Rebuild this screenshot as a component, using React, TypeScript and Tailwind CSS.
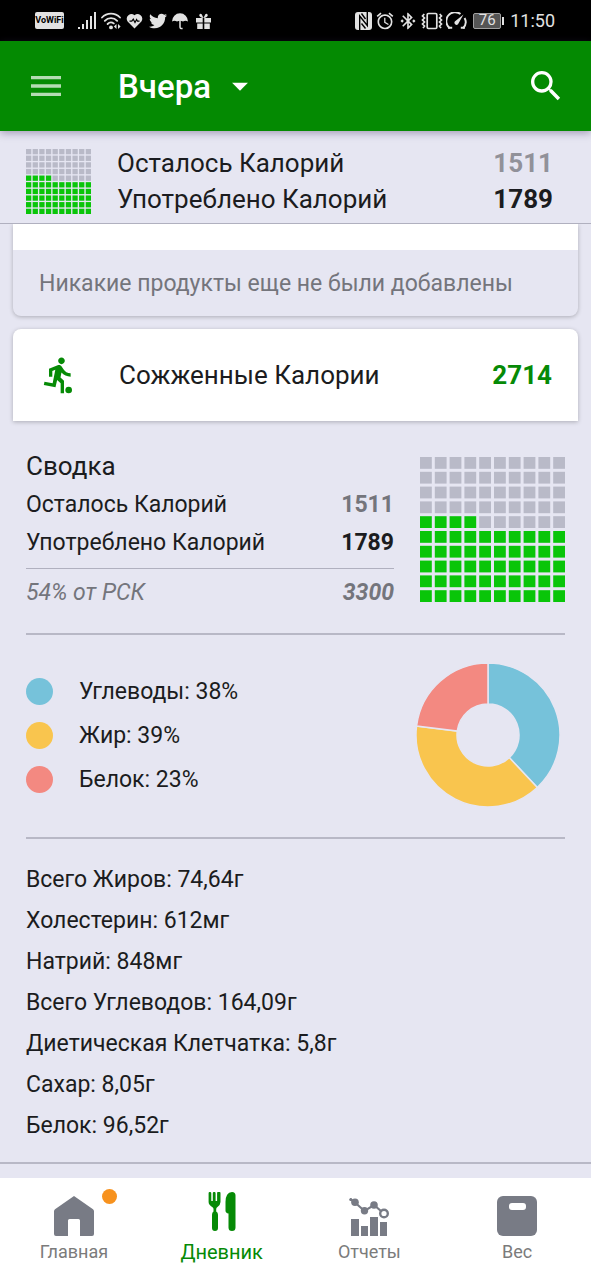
import type { ReactNode } from "react";
import { FaTwitter } from "react-icons/fa";
import {
  MdAlarm,
  MdArrowDropDown,
  MdBluetoothConnected,
  MdMenu,
  MdSearch,
} from "react-icons/md";

const TOTAL_CELLS = 100;

const macros = [
  { name: "Углеводы", percent: 38, dot: "bg-[#76c2da]", fill: "fill-[#76c2da]" },
  { name: "Жир", percent: 39, dot: "bg-[#f9c54e]", fill: "fill-[#f9c54e]" },
  { name: "Белок", percent: 23, dot: "bg-[#f38981]", fill: "fill-[#f38981]" },
];

const nutrients = [
  { name: "Всего Жиров", amount: "74,64г" },
  { name: "Холестерин", amount: "612мг" },
  { name: "Натрий", amount: "848мг" },
  { name: "Всего Углеводов", amount: "164,09г" },
  { name: "Диетическая Клетчатка", amount: "5,8г" },
  { name: "Сахар", amount: "8,05г" },
  { name: "Белок", amount: "96,52г" },
];

function SignalIcon() {
  return (
    <svg className="h-[18px] w-[18px] fill-current" viewBox="0 0 18 18">
      <path d="M0 15h2v2H0zM4 12h2v5H4zM8 8h2v9H8zM12 4h2v13h-2zM16 0h2v17h-2z" />
    </svg>
  );
}

function WifiIcon() {
  return (
    <svg className="h-[18px] w-5" viewBox="0 0 20 18">
      <g fill="none" stroke="currentColor" strokeWidth="1.8" strokeLinecap="round">
        <path d="M1 5.500a12.500 12.500 0 0 1 18 0" />
        <path d="M3.800 8.800a8.500 8.500 0 0 1 12.400 0" />
        <path d="M6.600 12a4.800 4.800 0 0 1 6.200-.6" />
      </g>
      <circle cx="10" cy="15.400" r="1.900" fill="currentColor" />
      <path d="M15.500 12v5l-2.600-2.500zM17 12v5l2.600-2.500z" fill="currentColor" />
    </svg>
  );
}

function HeartRateIcon() {
  return (
    <svg className="h-[18px] w-[17px]" viewBox="0 0 17 18">
      <path
        d="M8.500 16.500L1.600 9.400A4.700 4.700 0 0 1 8.500 3.200a4.700 4.700 0 0 1 6.900 6.200z"
        fill="currentColor"
      />
      <path
        d="M3.500 9.200h2.300l1.500-2 1.700 3.300 1.600-3 .9 1.700h2"
        fill="none"
        stroke="#000"
        strokeWidth="1.200"
      />
    </svg>
  );
}

function UmbrellaIcon() {
  return (
    <svg className="h-[18px] w-4" viewBox="0 0 16 18">
      <path
        d="M0 9.500a8 8.200 0 0 1 16 0q-2.600-1.600-5 0-3-1.400-6 0-2.400-1.600-5 0z"
        fill="currentColor"
      />
      <path
        d="M8 8v7q0 1.800 2.600 1.500"
        fill="none"
        stroke="currentColor"
        strokeWidth="1.500"
      />
    </svg>
  );
}

function GiftIcon() {
  return (
    <svg className="h-[18px] w-[15px]" viewBox="0 0 15 18">
      <path
        d="M0 6h6.700v4.500H0zM8.300 6H15v4.500H8.300zM1.200 11.500h5.500V17H1.200zM8.300 11.500h5.500V17H8.300z"
        fill="currentColor"
      />
      <path
        d="M7.500 6L5.700 2.200Q4 1 3.200 3.200 3.500 5.500 7.500 6l1.800-3.800q1.700-1.200 2.500 1Q11.500 5.500 7.500 6z"
        fill="currentColor"
      />
    </svg>
  );
}

function NfcIcon() {
  return (
    <svg className="h-[18px] w-[17px]" viewBox="0 0 17 18">
      <rect width="17" height="18" rx="3" fill="currentColor" />
      <path
        d="M4.700 18V4l7.600 9.500V0"
        fill="none"
        stroke="#000"
        strokeWidth="1.400"
      />
      <path d="M6.500 1.500l4 5.500M6.500 11.500l4 5" stroke="#000" strokeWidth="1.400" />
    </svg>
  );
}

function VibrateIcon() {
  return (
    <svg className="h-[18px] w-[22px]" viewBox="0 0 22 18">
      <g fill="none" stroke="currentColor" strokeWidth="1.7">
        <rect x="6.2" y="1.5" width="9.6" height="15" rx="1.2" />
        <path d="M3.300 2L1.500 4l2 2-2 2 2 2-2 2 2 2-1.500 2M18.700 2l1.800 2-2 2 2 2-2 2 2 2-2 2 1.500 2" />
      </g>
    </svg>
  );
}

function GaugeIcon() {
  return (
    <svg className="h-[18px] w-[21px]" viewBox="0 0 21 18">
      <g fill="none" stroke="currentColor" strokeWidth="1.900">
        <path d="M3.800 16.200A8.600 8.600 0 0 1 14.500 2" />
        <path d="M18.600 6a8.600 8.600 0 0 1-1.600 10.200" />
        <path d="M2 15.800h4.200M19 15.800h-4.200" />
      </g>
      <path d="M17.500 2.500L12 12.200a2.100 2.100 0 0 1-3.200-2.700z" fill="currentColor" />
    </svg>
  );
}

function ExerciseIcon() {
  return (
    <svg className="h-10 w-10 fill-[#068a06]" viewBox="0 0 24 24">
      <path d="M13.49 5.48c1.1 0 2-.9 2-2s-.9-2-2-2-2 .9-2 2 .9 2 2 2zm-3.6 13.9l1-4.4 2.1 2v6h2v-7.5l-2.1-2 .6-3c1.3 1.5 3.3 2.5 5.5 2.5v-2c-1.9 0-3.5-1-4.3-2.4l-1-1.6c-.4-.6-1-1-1.7-1-.3 0-.5.1-.8.1l-5.2 2.2v4.7h2v-3.4l1.8-.7-1.6 8.1-4.9-1-.4 2 7 1.4z" />
      <circle cx="17.8" cy="21" r="2" />
    </svg>
  );
}

function HomeIcon() {
  return (
    <svg className="size-10 fill-current" viewBox="0 0 40 40">
      <path d="M20 0L39 13.2q1 .8 1 2V38a2 2 0 0 1-2 2H26V24.500a1.500 1.500 0 0 0-1.500-1.500h-9a1.500 1.500 0 0 0-1.500 1.500V40H2a2 2 0 0 1-2-2V15.200q0-1.200 1-2z" />
    </svg>
  );
}

function DiaryIcon() {
  return (
    <svg className="size-10 fill-current" viewBox="0 0 40 40">
      <path d="M8 0a1.300 1.300 0 0 1 1.300 1.300V9h1.500V1.300a1.400 1.400 0 0 1 2.800 0V9h1.500V1.300a1.300 1.300 0 0 1 3.400 0V10q0 3-3.300 5.300-1 .7-1 2v2.200q1.800 1 1.800 3.200V36a3 3 0 0 1-6 0V22.700q0-2.200 1.500-3.200v-2.200q0-1.300-1-2Q6.600 13 6.600 10V1.300A1.300 1.300 0 0 1 8 0z" />
      <path d="M30 0q3.500.2 3.500 3.500V35.500a3.500 3.500 0 0 1-7 0V21.500q-3-.3-3-3V10Q23.500.5 30 0z" />
    </svg>
  );
}

function ReportsIcon() {
  return (
    <svg className="size-10" viewBox="0 0 40 40">
      <path
        d="M2 23h8v17H2zM12 30h7v10h-7zM21 21h8v19h-8zM31 26h7v14h-7z"
        fill="currentColor"
      />
      <g fill="none" stroke="currentColor" strokeWidth="2.2">
        <path d="M1 3l5 3.500 9.500 8.500L25 9l7 6" />
        <circle cx="35" cy="17.500" r="3.800" strokeWidth="2.400" />
      </g>
      <g fill="currentColor">
        <circle cx="1.800" cy="3.500" r="1.500" />
        <circle cx="6" cy="6.300" r="3.800" />
        <circle cx="15.500" cy="14.800" r="3.700" />
        <circle cx="25" cy="9" r="3.800" />
      </g>
    </svg>
  );
}

function WeightIcon() {
  return (
    <svg className="size-10" viewBox="0 0 40 40">
      <rect width="40" height="40" rx="6" fill="currentColor" />
      <rect x="12" y="7" width="17" height="7" rx="3" fill="#fff" />
    </svg>
  );
}

function CalorieGrid({ filled, className }: { filled: number; className: string }) {
  return (
    <svg className={className} viewBox="0 0 145 145">
      {Array.from({ length: TOTAL_CELLS }, (_, i) => {
        const row = Math.floor(i / 10);
        const col = i % 10;
        // cells fill from the bottom row up, left to right
        const isFilled = (9 - row) * 10 + col < filled;
        return (
          <rect
            key={i}
            x={col * 14.8}
            y={row * 14.8}
            width="11.8"
            height="11.8"
            className={isFilled ? "fill-[#09c509]" : "fill-[#b9bac8]"}
          />
        );
      })}
    </svg>
  );
}

function point(percent: number, radius: number) {
  const angle = (percent / 100) * Math.PI * 2;
  return `${71 + radius * Math.sin(angle)} ${71 - radius * Math.cos(angle)}`;
}

function MacroChart() {
  let start = 0;
  return (
    <svg className="mr-1.5 size-[142px] shrink-0 overflow-visible" viewBox="0 0 142 142">
      {macros.map(({ name, percent, fill }) => {
        const from = start;
        const to = start + percent;
        start = to;
        return (
          <path
            key={name}
            className={`${fill} stroke-[#e6e6f2]`}
            strokeWidth="1.5"
            d={`M${point(from, 72)}A72 72 0 0 1 ${point(to, 72)}L${point(to, 31)}A31 31 0 0 0 ${point(from, 31)}Z`}
          />
        );
      })}
    </svg>
  );
}

function StatusBar() {
  return (
    <div className="flex h-[41px] items-center justify-between bg-black pr-9 pl-[35px] text-[#e2e2e2]">
      <div className="flex items-center">
        <span className="flex h-[17px] w-[29px] items-center justify-center rounded-xs bg-[#e2e2e2] text-[9px] font-bold text-black">
          VoWiFi
        </span>
        <div className="ml-[14px] flex items-center gap-[5px]">
          <SignalIcon />
          <WifiIcon />
          <HeartRateIcon />
          <FaTwitter className="ml-px size-[18px]" />
          <UmbrellaIcon />
          <span className="ml-[3px]">
            <GiftIcon />
          </span>
        </div>
      </div>
      <div className="flex items-center">
        <div className="flex items-center gap-[3px]">
          <NfcIcon />
          <MdAlarm className="size-5" />
          <MdBluetoothConnected className="size-5" />
          <VibrateIcon />
          <GaugeIcon />
        </div>
        <div className="ml-1.5 flex items-center gap-px">
          <span className="flex h-4 w-7 items-center justify-center rounded-xs border border-[#a0a0a0] bg-[#555] text-[15px]">
            76
          </span>
          <span className="h-2 w-0.5 bg-[#e2e2e2]" />
        </div>
        <span className="ml-1.5 text-lg">11:50</span>
      </div>
    </div>
  );
}

function NavItem({
  label,
  active = false,
  badge = false,
  children,
}: {
  label: string;
  active?: boolean;
  badge?: boolean;
  children: ReactNode;
}) {
  return (
    <a
      href="#"
      aria-current={active ? "page" : undefined}
      className={
        active
          ? "flex flex-1 flex-col items-center gap-1 pt-[14px] text-[#068a06]"
          : "flex flex-1 flex-col items-center gap-1 pt-[18px] text-[#787b85]"
      }
    >
      <span className="relative">
        {children}
        {badge && (
          <span className="absolute -top-[7px] -right-[23px] size-[15px] rounded-full bg-[#f7921e]" />
        )}
      </span>
      <span
        className={active ? "text-xl leading-8" : "text-lg leading-6 text-[#7b7b7b]"}
      >
        {label}
      </span>
    </a>
  );
}

export default function App() {
  return (
    <div className="flex min-h-screen flex-col bg-[#e6e6f2] font-['Roboto',sans-serif] text-[#1b1c20]">
      <StatusBar />

      <header className="z-10 flex h-[90px] items-center bg-[#048a02] pr-[25px] pl-[26px] text-white shadow-[0_2px_8px_rgba(60,40,90,0.4)]">
        <button type="button" aria-label="Меню" className="text-white/70">
          <MdMenu className="size-10" />
        </button>
        <button type="button" className="ml-[52px] flex items-center gap-2.5">
          <span className="pt-0.5 text-[33px] font-medium">Вчера</span>
          <MdArrowDropDown className="size-[38px]" />
        </button>
        <button type="button" aria-label="Поиск" className="ml-auto">
          <MdSearch className="size-10" />
        </button>
      </header>

      <section className="z-[5] flex items-center border-b border-[#b0b0bf] bg-[#e6e6f2] pt-[14px] pr-[38px] pb-1.5 pl-[26px] text-[26px] leading-9">
        <CalorieGrid filled={54} className="size-[65px] shrink-0" />
        <dl className="ml-[26px] flex-1">
          <div className="flex justify-between">
            <dt>Осталось Калорий</dt>
            <dd className="font-bold text-[#919199]">1511</dd>
          </div>
          <div className="flex justify-between">
            <dt>Употреблено Калорий</dt>
            <dd className="font-bold">1789</dd>
          </div>
        </dl>
      </section>

      <main className="flex flex-1 flex-col">
        <div className="mx-[13px] overflow-hidden rounded-b-lg bg-[#e6e6f2] shadow-[0_1px_4px_rgba(0,0,0,0.25)]">
          <div className="h-[26px] bg-white" />
          <p className="px-[26px] pt-[18px] pb-4 text-[23px] leading-8 text-[#74757c]">
            Никакие продукты еще не были добавлены
          </p>
        </div>

        <div className="mx-[13px] mt-[13px] flex h-[92px] items-center rounded-t-lg bg-white px-[26px] text-[26px] shadow-[0_1px_4px_rgba(0,0,0,0.25)]">
          <ExerciseIcon />
          <span className="ml-10">Сожженные Калории</span>
          <span className="ml-auto font-bold text-[#068a06]">2714</span>
        </div>

        <section className="px-[26px] pt-[26px]">
          <div className="flex items-center gap-[26px]">
            <div className="flex-1 text-[23px] leading-[38px]">
              <h2 className="text-[26px] leading-[38px]">Сводка</h2>
              <dl className="pt-px">
                <div className="flex justify-between">
                  <dt>Осталось Калорий</dt>
                  <dd className="font-bold text-[#74757c]">1511</dd>
                </div>
                <div className="flex justify-between">
                  <dt>Употреблено Калорий</dt>
                  <dd className="font-bold">1789</dd>
                </div>
                <div className="mt-1.5 flex justify-between border-t border-[#b0b0bf] pt-[5px] text-[#74757c] italic">
                  <dt>54% от РСК</dt>
                  <dd className="font-bold">3300</dd>
                </div>
              </dl>
            </div>
            <CalorieGrid filled={54} className="size-[145px] shrink-0" />
          </div>

          <div className="mt-[21px] flex items-center justify-between border-y-2 border-[#b8b8c6] pt-[29px] pb-[31px] text-[23px]">
            <ul>
              {macros.map(({ name, percent, dot }) => (
                <li key={name} className="flex h-11 items-center gap-[26px]">
                  <span className={`size-[27px] rounded-full ${dot}`} />
                  <span className="pt-[3px]">
                    {name}: {percent}%
                  </span>
                </li>
              ))}
            </ul>
            <MacroChart />
          </div>

          <ul className="pt-5 pb-4 text-[23px] leading-[41px]">
            {nutrients.map(({ name, amount }) => (
              <li key={name}>
                {name}: {amount}
              </li>
            ))}
          </ul>
        </section>
        <hr className="border-t-2 border-[#b8b8c6]" />
      </main>

      <nav className="mt-[13px] flex h-[102px] bg-white">
        <NavItem label="Главная" badge>
          <HomeIcon />
        </NavItem>
        <NavItem label="Дневник" active>
          <DiaryIcon />
        </NavItem>
        <NavItem label="Отчеты">
          <ReportsIcon />
        </NavItem>
        <NavItem label="Вес">
          <WeightIcon />
        </NavItem>
      </nav>
    </div>
  );
}
